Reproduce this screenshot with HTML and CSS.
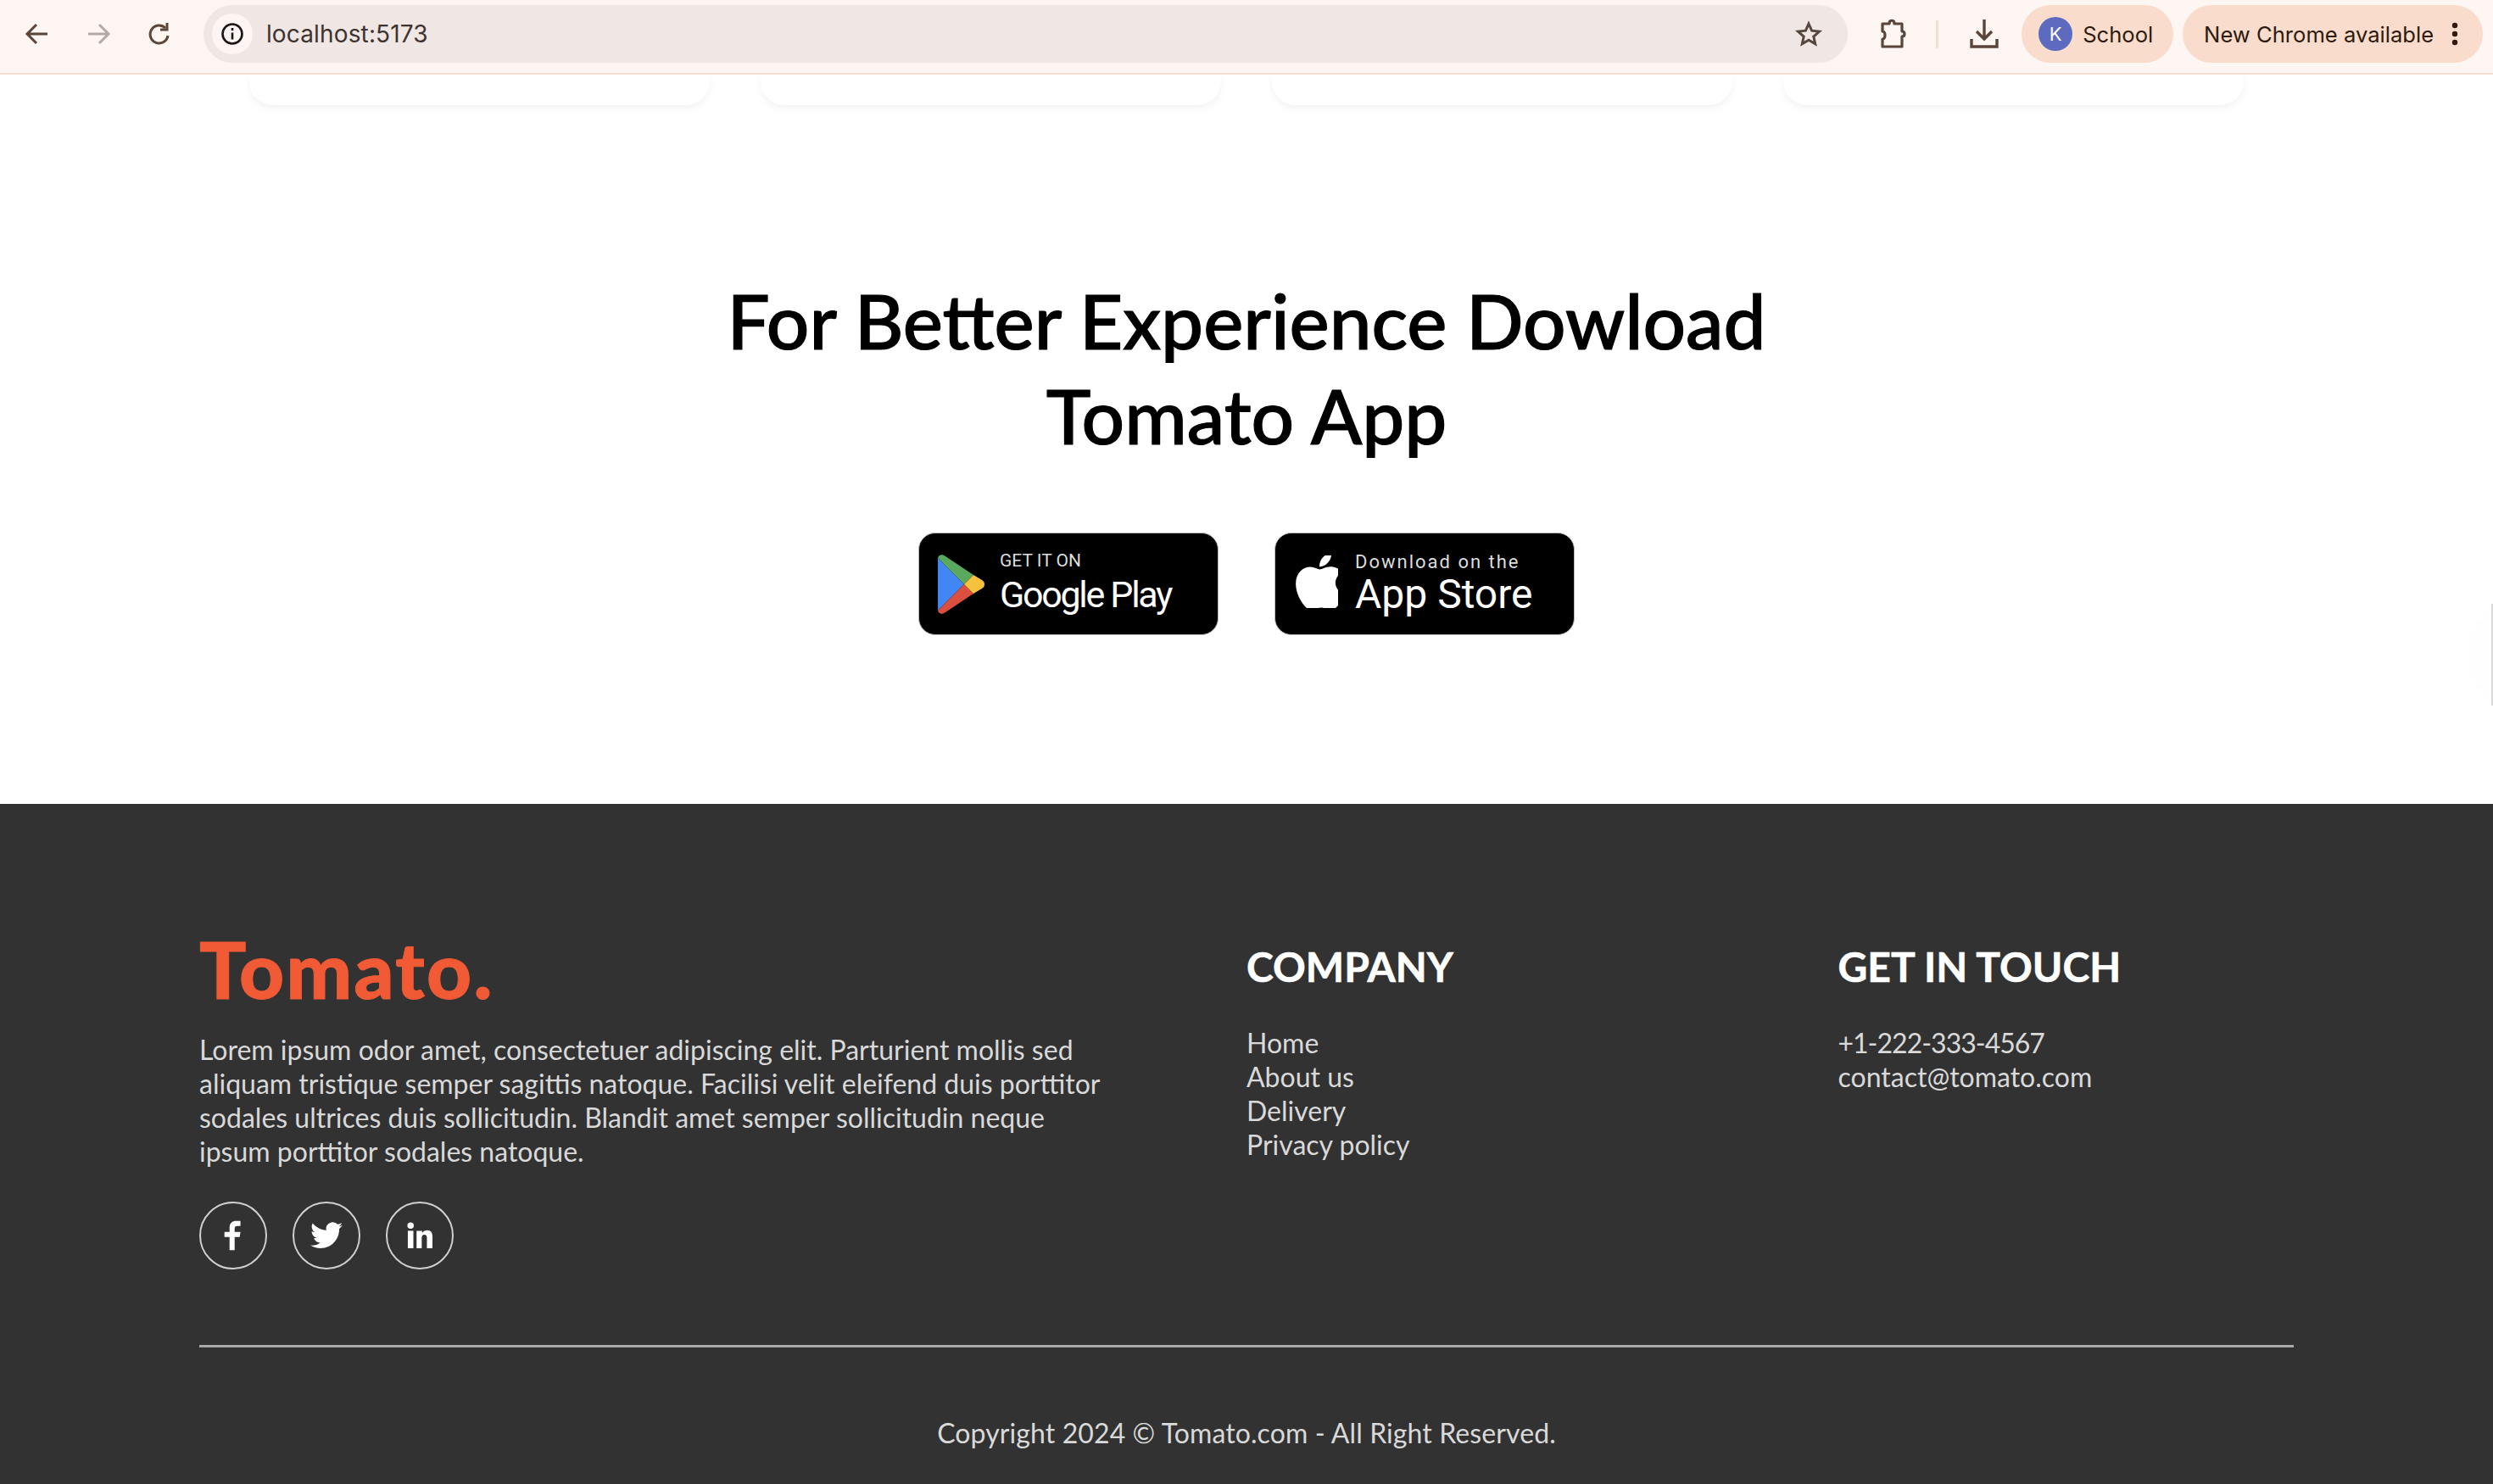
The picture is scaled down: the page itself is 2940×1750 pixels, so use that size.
FILE: index.html
```html
<html>
    <head>
        <meta charset="utf-8">
        <title>Tomato</title>
        <link rel="stylesheet" href="styles.css">
    </head>
    <body>
        <div class="toolbar">
            <div class="nav_btn">
                <svg width="32" height="32" viewBox="0 0 32 32" fill="none" stroke="#5b4538" stroke-width="3"><path d="M28 16H5M15 5 4 16l11 11"/></svg>
            </div>
            <div class="nav_btn">
                <svg width="32" height="32" viewBox="0 0 32 32" fill="none" stroke="#b3aba6" stroke-width="3"><path d="M4 16h23M17 5l11 11-11 11"/></svg>
            </div>
            <div class="nav_btn">
                <svg width="32" height="32" viewBox="0 0 32 32" fill="none" stroke="#5b4538" stroke-width="3"><path d="M26 18a10.500 10.500 0 1 1-3-9"/><path d="M25 3v8h-8" /></svg>
            </div>
            <div class="address">
                <div class="site_info">
                    <svg width="28" height="28" viewBox="0 0 28 28" fill="none" stroke="#1c1410" stroke-width="2.6"><circle cx="14" cy="14" r="11.500"/><path d="M14 12.500v8M14 7v3"/></svg>
                </div>
                <span class="url">localhost:5173</span>
                <svg class="star" width="32" height="32" viewBox="0 0 32 32" fill="none" stroke="#56463e" stroke-width="3"><path d="m16 4 3.600 8.200 8.900.9-6.700 5.900 1.900 8.800-7.700-4.600-7.700 4.600 1.900-8.800-6.700-5.900 8.900-.9z"/></svg>
            </div>
            <div class="tool_icon">
                <svg width="34" height="36" viewBox="0 0 34 36" fill="none" stroke="#5b4538" stroke-width="3.2" stroke-linejoin="round"><path d="M4 6h8c0-5 6-5 6 0h9v9c4 0 4 6 0 6v12H4v-9c4 0 4-9 0-9z"/></svg>
            </div>
            <div class="divider"></div>
            <div class="tool_icon">
                <svg width="34" height="36" viewBox="0 0 34 36" fill="none" stroke="#5b4538" stroke-width="3.400"><path d="M17 1v22M8 15l9 9 9-9M2 24v9h30v-9"/></svg>
            </div>
            <div class="pill school">
                <span class="avatar">K</span>
                <span>School</span>
            </div>
            <div class="pill update">
                <span>New Chrome available</span>
                <svg width="8" height="28" viewBox="0 0 8 28" fill="#2e1a0e"><circle cx="4" cy="4" r="3.200"/><circle cx="4" cy="14" r="3.200"/><circle cx="4" cy="24" r="3.200"/></svg>
            </div>
        </div>

        <div class="cards">
            <div class="card"></div>
            <div class="card"></div>
            <div class="card"></div>
            <div class="card"></div>
        </div>

        <div class="app_download">
            <h1>For Better Experience Dowload<br>Tomato App</h1>
            <div class="badges">
                <div class="badge">
                    <svg class="play_logo" width="56" height="70" viewBox="0 0 56 70">
                        <path fill="#4285f4" d="M1 4v62l31-31z"/>
                        <path fill="#5aa95f" d="M1 4c1-4 5-5 9-2l33 22-11 11z"/>
                        <path fill="#db4f3f" d="M1 66c1 4 5 5 9 2l33-22-11-11z"/>
                        <path fill="#f6c23d" d="m43 24 10 6c4 2 4 8 0 10l-10 6-11-11z"/>
                    </svg>
                    <div class="badge_text">
                        <span class="small">GET IT ON</span>
                        <span class="big play">Google Play</span>
                    </div>
                </div>
                <div class="badge">
                    <svg class="apple_logo" width="50" height="62" viewBox="0 0 384 472" fill="#fff"><path d="M318 250c0-43 19-75 58-99-22-31-54-48-97-51-41-3-85 24-101 24-17 0-56-23-87-23C27 102-41 152-41 254c0 30 6 61 17 93 15 42 69 146 125 144 29-1 50-21 88-21 37 0 56 21 88 21 57-1 105-95 119-137-75-36-78-104-78-104zM253 60c31-37 28-71 27-83-27 2-59 19-77 40-20 23-32 51-29 82 29 2 56-13 79-39z" transform="translate(42 0)"/></svg>
                    <div class="badge_text">
                        <span class="small apple">Download on the</span>
                        <span class="big">App Store</span>
                    </div>
                </div>
            </div>
        </div>

        <div class="footer">
            <div class="footer_content">
                <div class="footer_left">
                    <div class="logo">Tomato.</div>
                    <p>Lorem ipsum odor amet, consectetuer adipiscing elit. Parturient mollis sed<br>aliquam tristique semper sagittis natoque. Facilisi velit eleifend duis porttitor<br>sodales ultrices duis sollicitudin. Blandit amet semper sollicitudin neque<br>ipsum porttitor sodales natoque.</p>
                    <div class="social">
                        <div class="social_icon">
                            <svg width="24" height="38" viewBox="0 0 28 40" fill="#fff"><path d="M9 40V22H2v-7h7V9c0-6 4-9 9-9h6v7h-4c-3 0-4 1-4 4v4h8l-1 7h-7v18z"/></svg>
                        </div>
                        <div class="social_icon">
                            <svg width="38" height="34" viewBox="0 0 24 20" fill="#fff"><path d="M24 2.400c-.9.4-1.800.7-2.800.8 1-.6 1.800-1.600 2.200-2.700-.9.6-2 1-3.100 1.200A4.900 4.900 0 0 0 11.900 6.100C7.800 5.900 4.200 3.900 1.700.9c-1.300 2.200-.7 5.100 1.500 6.600-.8 0-1.600-.2-2.200-.6 0 2.300 1.600 4.400 3.900 4.900-.7.200-1.500.2-2.200.1.600 2 2.500 3.400 4.600 3.400A9.900 9.900 0 0 1 0 17.300 14 14 0 0 0 7.500 19.500c9.100 0 14.300-7.700 14-14.600 1-.7 1.800-1.600 2.500-2.500z"/></svg>
                        </div>
                        <div class="social_icon">
                            <svg width="30" height="34" viewBox="0 0 32 34" fill="#fff"><circle cx="4.500" cy="4.500" r="4"/><rect x="1" y="11" width="7" height="22"/><path d="M12 11h7v3c1.500-2.500 4-3.600 6.500-3.600 4.500 0 6.500 3 6.500 8V33h-7V20c0-2.500-1-4-3-4-2.500 0-3.500 1.800-3.500 4v13h-6.500z"/></svg>
                        </div>
                    </div>
                </div>
                <div class="footer_col">
                    <h2>COMPANY</h2>
                    <ul>
                        <li>Home</li>
                        <li>About us</li>
                        <li>Delivery</li>
                        <li>Privacy policy</li>
                    </ul>
                </div>
                <div class="footer_col">
                    <h2>GET IN TOUCH</h2>
                    <ul>
                        <li class="phone">+1-222-333-4567</li>
                        <li>contact@tomato.com</li>
                    </ul>
                </div>
            </div>
            <hr>
            <p class="copyright">Copyright 2024 © Tomato.com - All Right Reserved.</p>
        </div>

        <div class="edge_shadow"></div>
    </body>
</html>
```

FILE: styles.css
```css
html, body {
    margin: 0;
    height: 1750px;
    overflow: hidden;
    background: #fff;
    font-family: "Lato", "Liberation Sans", sans-serif;
}

/* browser bar */
.toolbar {
    height: 88px;
    display: flex;
    align-items: center;
    padding: 0 12px 6px 8px;
    box-sizing: border-box;
    background: #fdf6f2;
    border-bottom: 2px solid #f6dfd2;
    font-family: "Inter", "Liberation Sans", sans-serif;
    color: #2e1a0e;
}
.nav_btn {
    width: 72px;
    display: flex;
    justify-content: center;
}
.address {
    margin-left: 16px;
    width: 1940px;
    height: 68px;
    border-radius: 34px;
    background: #f0e6e3;
    display: flex;
    align-items: center;
    padding: 0 30px 0 10px;
    box-sizing: border-box;
}
.site_info {
    width: 48px;
    height: 48px;
    border-radius: 24px;
    background: #fdf6f2;
    display: flex;
    align-items: center;
    justify-content: center;
}
.url {
    margin-left: 16px;
    font-size: 28px;
    letter-spacing: 0.15px;
    color: #3d3330;
    flex: 1;
}
.tool_icon {
    display: flex;
    justify-content: center;
    width: 36px;
}
.address + .tool_icon {
    margin-left: 36px;
}
.divider {
    width: 3px;
    height: 33px;
    margin: 0 36px 0 32px;
    background: #f6dfd2;
}
.pill {
    height: 68px;
    border-radius: 34px;
    background: #f9dccb;
    display: flex;
    align-items: center;
    font-size: 25.6px;
    box-sizing: border-box;
}
.school {
    width: 179px;
    margin-left: 26px;
    padding-left: 20px;
    gap: 12px;
}
.avatar {
    width: 40px;
    height: 40px;
    border-radius: 20px;
    background: #5c6bc0;
    color: #fff;
    font-size: 22px;
    display: flex;
    align-items: center;
    justify-content: center;
}
.update {
    width: 354px;
    margin-left: 11px;
    padding-left: 25px;
    gap: 21px;
}

/* bottom of the cards scrolled under the bar */
.cards {
    width: 2352px;
    margin: 0 auto;
    display: flex;
    justify-content: space-between;
}
.card {
    width: 543px;
    height: 36px;
    border-radius: 0 0 28px 28px;
    background: #fff;
    box-shadow: 0 4px 10px rgba(0, 0, 0, 0.05);
}

.app_download {
    height: 824px;
    padding-top: 198px;
    box-sizing: border-box;
    text-align: center;
}
.app_download h1 {
    margin: 0;
    font-size: 89px;
    line-height: 112px;
    font-weight: 500;
    color: #000;
    -webkit-text-stroke: 1.2px #000;
}
.badges {
    margin-top: 82px;
    display: flex;
    justify-content: center;
    gap: 66px;
}
.badge {
    width: 354px;
    height: 121px;
    box-sizing: border-box;
    border: 1px solid #bbb;
    border-radius: 20px;
    background: #000;
    color: #fff;
    display: flex;
    align-items: center;
    text-align: left;
    font-family: "Roboto", "Liberation Sans", sans-serif;
}
.play_logo {
    margin-left: 21px;
    margin-right: 18px;
}
.apple_logo {
    margin-left: 24px;
    margin-right: 20px;
    margin-top: -6px;
}
.badge_text {
    display: flex;
    flex-direction: column;
    margin-top: -3px;
}
.small {
    font-size: 21px;
    line-height: 28px;
    color: #ddd;
}
.small.apple {
    font-size: 22px;
    letter-spacing: 2px;
}
.big {
    font-size: 48px;
    line-height: 48px;
}
.big.play {
    font-size: 43px;
    letter-spacing: -2.3px;
    line-height: 52px;
}

/* footer */
.footer {
    height: 802px;
    box-sizing: border-box;
    padding: 162px 235px 0;
    background: #323232;
    color: #d9d9d9;
    font-size: 32px;
    line-height: 40px;
}
.footer_content {
    display: grid;
    grid-template-columns: 2fr 1fr 1fr;
    gap: 160px;
}
.logo {
    height: 68px;
    font-size: 92px;
    line-height: 66px;
    font-weight: 900;
    letter-spacing: 2.4px;
    color: #f05a35;
    -webkit-text-stroke: 1px #f05a35;
}
.footer_left p {
    margin: 40px 0 39px;
    white-space: nowrap;
}
.social {
    display: flex;
    gap: 30px;
}
.social_icon {
    width: 80px;
    height: 80px;
    box-sizing: border-box;
    border: 2px solid #d0d0d0;
    border-radius: 50%;
    display: flex;
    align-items: center;
    justify-content: center;
}
.footer_col h2 {
    margin: 0 0 40px;
    font-size: 48px;
    line-height: 60px;
    font-weight: 700;
    color: #fff;
    -webkit-text-stroke: 0.6px #fff;
}
.footer_col ul {
    margin: 0;
    padding: 0;
    list-style: none;
}
.phone {
    letter-spacing: -1px;
}
.footer hr {
    margin: 89px 0 0;
    height: 3px;
    border: none;
    background: #a9a9a9;
}
.copyright {
    margin: 81px 0 0;
    text-align: center;
    letter-spacing: 0.1px;
}

.edge_shadow {
    position: absolute;
    right: 0;
    top: 712px;
    width: 2px;
    height: 120px;
    background: #d8d8d8;
    box-shadow: 0 0 60px rgba(0, 0, 0, 0.2);
}
```
